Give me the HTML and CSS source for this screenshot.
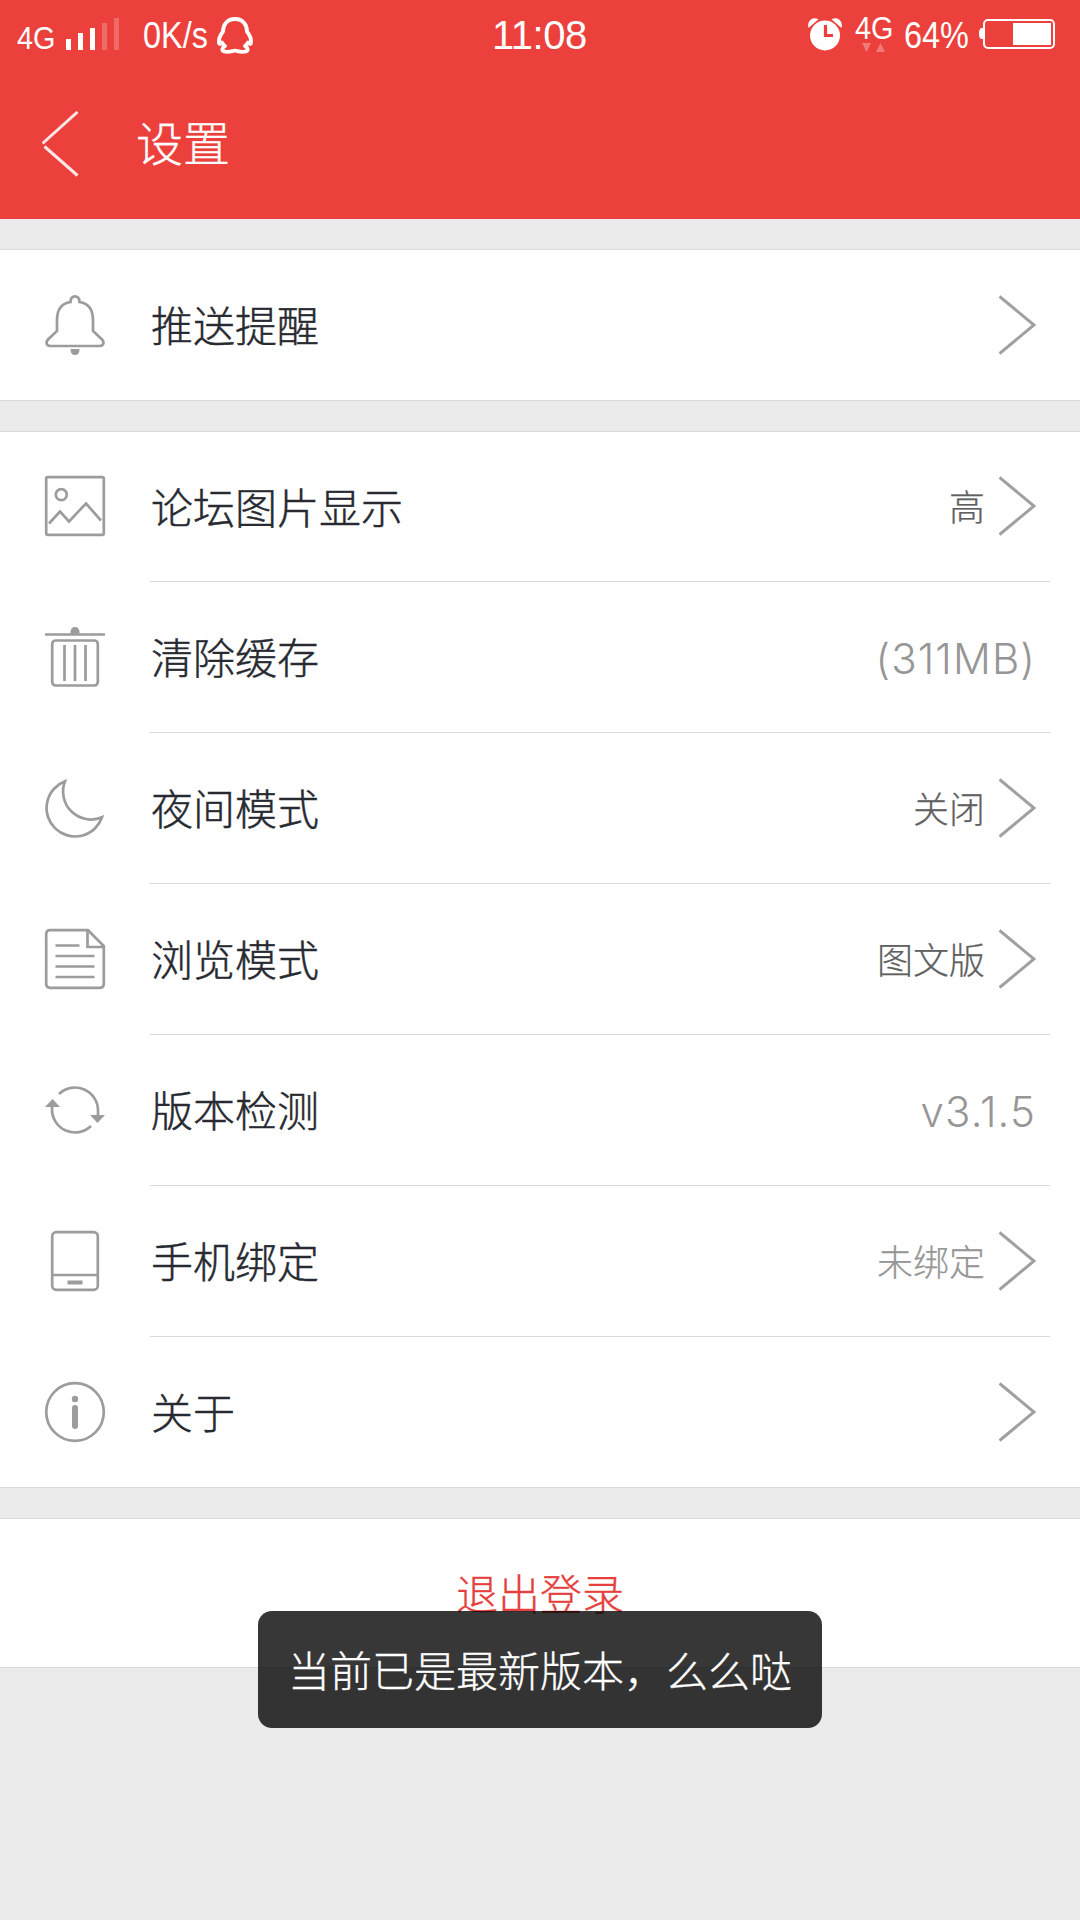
FILE: index.html
```html
<!DOCTYPE html>
<html lang="zh-CN">
<head>
<meta charset="utf-8">
<title>设置</title>
<link rel="stylesheet" href="styles.css">
</head>
<body>
<svg class="defs" width="0" height="0">
  <symbol id="chevron" viewBox="0 0 37 60"><path d="M0.500 1.500 35 30 0.500 58.500" fill="none" stroke="#a0a0a0" stroke-width="3"/></symbol>
</svg>
<header class="header">
  <div class="status">
    <span class="net"><span class="narrow">4G</span></span>
    <svg class="bars" width="56" height="34" viewBox="0 0 56 34" fill="#fff"><path d="M1 22h5v11H1zM13 16h5v17h-5zM25 11h5v22h-5z"/><path opacity=".22" d="M37 6h5v27h-5zM49 1h5v32h-5z"/></svg>
    <span class="speed"><span class="narrow">0K/s</span></span>
    <svg class="qq" width="38" height="40" viewBox="0 0 38 40" fill="none" stroke="#fff" stroke-width="3.800" stroke-linejoin="round"><path d="M19 4C11 4 7 10 7 16.500C5 19 2.500 24 3 28C3.500 30 5 28.500 6 27.500C7 29 8 30.500 9 31C6 32.500 5 36 9 36.500C13 37.500 16 36 19 35.500C22 36 25 37.500 29 36.500C33 36 32 32.500 29 31C30 30.500 31 29 32 27.500C33 28.500 34.500 30 35 28C35.500 24 33 19 31 16.500C31 10 27 4 19 4Z"/></svg>
    <span class="clock">11:08</span>
    <svg class="alarm" width="36" height="36" viewBox="0 0 36 36"><circle cx="17" cy="18.500" r="15" fill="#fff"/><path d="M1 9.500C0 4 5 1 9 2.500ZM33 9.500C34 4 29 1 25 2.500Z" fill="#fff" stroke="#fff" stroke-width="1.500"/><path d="M17.500 8v10.500H25" fill="none" stroke="#ec403d" stroke-width="3.200"/></svg>
    <span class="data"><span class="net2"><span class="narrow">4G</span></span><svg width="24" height="11" viewBox="0 0 24 11" fill="#fff" opacity=".3"><path d="M0 1h9L4.500 10zM14 10h9L18.500 1z"/></svg></span>
    <span class="percent"><span class="narrow">64%</span></span>
    <svg class="battery" width="78" height="32" viewBox="0 0 78 32"><rect x="6" y="3" width="70" height="28" rx="4" fill="none" stroke="#fff" stroke-width="2"/><path d="M35 6h38v22H35z" fill="#fff"/><path d="M5 11v11H4Q1 22 1 16.500T4 11z" fill="#fff"/></svg>
  </div>
  <div class="nav">
    <svg width="38" height="66" viewBox="0 0 38 66" fill="none" stroke="#fff" stroke-opacity=".87" stroke-width="3"><path d="M35.500 1 .5 32.500M2.500 35.500 35.500 64.500"/></svg>
    <h1 class="title">设置</h1>
  </div>
</header>

<main>
<section class="group">
  <div class="row single">
    <svg class="icon" viewBox="0 0 60 60"><path d="M25.500 7C25 -.5 35 -.5 34.500 7C44 8.500 48 15.500 48 25V36L57 44.500C60 48 58 51 54 51H6C2 51 0 48 3 44.500L12 36V25C12 15.500 16 8.500 25.500 7Z"/><path class="solid" d="M25.500 54h9q0 6-4.500 6t-4.500-6z"/></svg>
    <div class="body"><span class="label">推送提醒</span><svg class="chev"><use href="#chevron"/></svg></div>
  </div>
</section>

<section class="group">
  <div class="row first">
    <svg class="icon" viewBox="0 0 60 60"><rect x="1.200" y="1.200" width="57.600" height="57.600" rx="1.500"/><circle cx="16.300" cy="18.700" r="5.500"/><path d="M4 47.500 15 35.500 24 45.500 41 27.500 56 44.500"/></svg>
    <div class="body"><span class="label">论坛图片显示</span><span class="value">高</span><svg class="chev"><use href="#chevron"/></svg></div>
  </div>
  <div class="row">
    <svg class="icon" viewBox="0 0 60 60"><path d="M0 7.500h60M19.500 18v36M30 18v36M40.500 18v36"/><rect x="7.200" y="13.500" width="45.600" height="45" rx="3.500"/><path class="solid" d="M25.500 7V4.500Q26 0 30 0T34.500 4.500V7z"/></svg>
    <div class="body"><span class="label">清除缓存</span><span class="latin">(311MB)</span></div>
  </div>
  <div class="row">
    <svg class="icon" viewBox="0 0 60 60"><path d="M20 3.300A28.500 28.500 0 1 0 57 39.300A28 28 0 0 1 20 3.300Z"/></svg>
    <div class="body"><span class="label">夜间模式</span><span class="value">关闭</span><svg class="chev"><use href="#chevron"/></svg></div>
  </div>
  <div class="row">
    <svg class="icon" viewBox="0 0 60 60"><path d="M43 1.200H5Q1.200 1.200 1.200 5V55Q1.200 58.800 5 58.800H55Q58.800 58.800 58.800 55V17ZM42.500 1.500V18H58.500M10.500 16.500h24M10.500 27h39M10.500 37.500h39M10.500 48h39"/></svg>
    <div class="body"><span class="label">浏览模式</span><span class="value">图文版</span><svg class="chev"><use href="#chevron"/></svg></div>
  </div>
  <div class="row">
    <svg class="icon" viewBox="0 0 60 60"><path d="M14 14A23 23 0 0 1 53 31V36M46 46A23 23 0 0 1 7 29V24"/><path class="solid" d="M0 27 7.500 19 15 27zM45 35h15l-7.500 8z"/></svg>
    <div class="body"><span class="label">版本检测</span><span class="latin">v3.1.5</span></div>
  </div>
  <div class="row">
    <svg class="icon" viewBox="0 0 60 60"><rect x="7.200" y="1.200" width="45.600" height="57.600" rx="4"/><path d="M7 44h46"/><path class="solid" d="M22.500 49.500h15v4h-15z"/></svg>
    <div class="body"><span class="label">手机绑定</span><span class="value muted">未绑定</span><svg class="chev"><use href="#chevron"/></svg></div>
  </div>
  <div class="row last">
    <svg class="icon" viewBox="0 0 60 60"><circle cx="30" cy="30" r="28.800"/><circle class="solid" cx="30" cy="17" r="3.200"/><path d="M30 26v18" stroke-width="6" stroke-linecap="round"/></svg>
    <div class="body"><span class="label">关于</span><svg class="chev"><use href="#chevron"/></svg></div>
  </div>
</section>

<section class="group logout">退出登录</section>
</main>
<div class="toast">当前已是最新版本，么么哒</div>
</body>
</html>
```
FILE: styles.css
```css
* { box-sizing: border-box; }
body {
  margin: 0;
  height: 1920px;
  position: relative;
  overflow: hidden;
  background: #ebebeb;
  color: #272a30;
  font-family: "Noto Sans CJK SC", sans-serif;
  font-weight: 300;
}
svg { display: block; flex: none; }
.defs { position: absolute; }

.header { height: 219px; background: #ec403d; color: #fff; }
.status {
  display: flex;
  align-items: flex-start;
  height: 72px;
  padding-left: 17px;
  font: 400 36px/36px "Liberation Sans", Arial, sans-serif;
  white-space: nowrap;
}
.status > * { flex: none; }
.narrow { display: inline-block; transform: scaleX(.9); transform-origin: 0 0; }
.net { width: 48px; margin-top: 20px; font-size: 32px; }
.bars { margin-top: 17px; }
.speed { width: 66px; margin: 18px 7px 0 22px; }
.qq { margin-top: 15px; }
.clock { width: 100px; margin: 17px 216px 0 238px; font-size: 40px; letter-spacing: -0.5px; }
.alarm { margin-top: 17px; }
.data { display: flex; flex-direction: column; align-items: center; width: 38px; margin: 10px 12px 0 11px; }
.net2 { width: 38px; height: 32px; font-size: 32px; }
.percent { width: 66px; margin: 18px 8px 0 -1px; }
.battery { margin-top: 17px; }

.nav { display: flex; align-items: center; gap: 56px; height: 144px; padding-left: 42px; }
.title { margin: 0; padding-bottom: 6px; font-size: 47px; font-weight: 300; line-height: 60px; -webkit-text-stroke: .3px; }

.group { margin-top: 30px; background: #fff; border: solid #dadada; border-width: 1px 0; }
.row { display: flex; align-items: center; height: 151px; padding-left: 45px; }
.row.single, .row.first, .row.last { height: 150px; }
.icon { width: 60px; height: 60px; margin-bottom: 2px; overflow: visible; fill: none; stroke: #9c9c9c; stroke-width: 2.7; }
.single .icon { margin-bottom: 1px; }
.last .icon { margin-bottom: 0; }
.icon .solid { fill: #9c9c9c; stroke: none; }
.body {
  display: flex;
  align-items: center;
  flex: 1;
  height: 100%;
  margin: 0 30px 0 45px;
  padding-right: 14px;
  border-bottom: 1px solid #dadada;
}
.single .body, .last .body { border-bottom: 0; }
.label { flex: 1; padding: 0 0 2px 1px; font-size: 42px; line-height: 60px; -webkit-text-stroke: .45px; }
.value { margin-right: 14px; padding-bottom: 3px; font-size: 36px; line-height: 50px; color: #606060; -webkit-text-stroke: .25px; }
.muted { color: #969696; }
.chev { width: 37px; height: 60px; margin-bottom: 1px; }
.latin { padding-top: 3px; font-family: Inter, "Liberation Sans", sans-serif; font-size: 42px; line-height: 50px; letter-spacing: 1.1px; color: #969696; }

.logout {
  height: 150px;
  color: #e5403d;
  font-size: 42px;
  line-height: 145px;
  text-align: center;
  -webkit-text-stroke: .3px;
}
.toast {
  position: absolute;
  left: 258px;
  top: 1611px;
  width: 564px;
  height: 117px;
  border-radius: 14px;
  background: rgba(0, 0, 0, .785);
  color: #fff;
  font-size: 42px;
  line-height: 116px;
  text-align: center;
  white-space: nowrap;
  -webkit-text-stroke: .3px;
}
```
